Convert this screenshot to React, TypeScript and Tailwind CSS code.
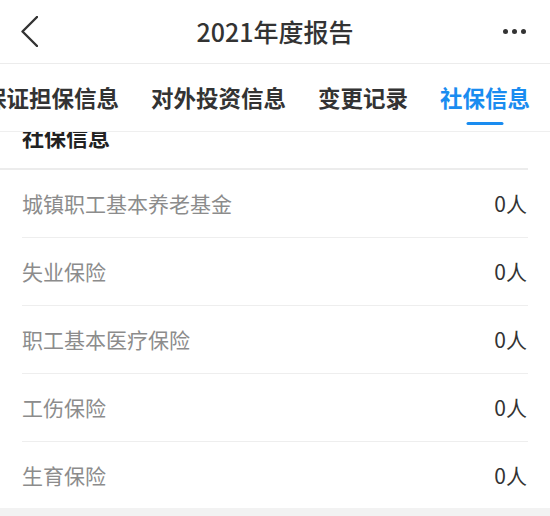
import React from 'react';

const tabs = [
  { label: '保证担保信息', active: false },
  { label: '对外投资信息', active: false },
  { label: '变更记录', active: false },
  { label: '社保信息', active: true },
];

const rows = [
  { label: '城镇职工基本养老基金', value: '0人' },
  { label: '失业保险', value: '0人' },
  { label: '职工基本医疗保险', value: '0人' },
  { label: '工伤保险', value: '0人' },
  { label: '生育保险', value: '0人' },
];

export default function App() {
  return (
    <div
      className="w-[550px] h-[516px] flex flex-col bg-white overflow-hidden"
      style={{ fontFamily: '"Noto Sans CJK SC", "Noto Sans", sans-serif' }}
    >
      {/* Header */}
      <div className="h-[64px] flex items-center justify-between border-b border-[#ececec] shrink-0">
        <div className="w-[90px] pl-[21px] flex items-center">
          <svg width="17" height="31" viewBox="0 0 17 31" fill="none">
            <polyline points="16,1 1.5,15.5 16,30" stroke="#333" strokeWidth="2.4" strokeLinecap="round" strokeLinejoin="round" />
          </svg>
        </div>
        <div className="text-[25px] leading-none font-medium text-[#333]">2021年度报告</div>
        <div className="w-[90px] pr-[24px] flex items-center justify-end gap-[4px]">
          <span className="w-[5px] h-[5px] rounded-full bg-[#333]" />
          <span className="w-[5px] h-[5px] rounded-full bg-[#333]" />
          <span className="w-[5px] h-[5px] rounded-full bg-[#333]" />
        </div>
      </div>

      {/* Tabs */}
      <div className="h-[68px] flex justify-end pr-[4px] overflow-hidden border-b border-[#efefef] shrink-0">
        {tabs.map((tab) => (
          <div key={tab.label} className="relative shrink-0 px-[16px] flex items-center pb-[1px]">
            <span
              className={`text-[22.5px] leading-none font-semibold whitespace-nowrap ${
                tab.active ? 'text-[#1a8cf0]' : 'text-[#333]'
              }`}
            >
              {tab.label}
            </span>
            {tab.active && (
              <span className="absolute bottom-[6px] left-1/2 -translate-x-1/2 w-[37px] h-[3px] rounded-full bg-[#1a8cf0]" />
            )}
          </div>
        ))}
      </div>

      {/* Section title (scrolled under tabs) */}
      <div className="h-[36px] flex flex-col overflow-hidden shrink-0">
        <div className="pl-[22px] -mt-[7px] text-[22px] leading-[22px] font-bold text-[#222]">社保信息</div>
      </div>
      <div className="h-[2px] bg-[#ececec] mr-[22px] shrink-0" />

      {/* Rows */}
      <div className="px-[22px] flex flex-col">
        {rows.map((row, i) => (
          <div
            key={row.label}
            className={`flex items-center justify-between ${
              i < rows.length - 1 ? 'h-[68px] border-b border-[#eeeeee]' : 'h-[66px]'
            }`}
          >
            <span className="text-[21px] leading-none text-[#8c8c8c]">{row.label}</span>
            <span className="text-[21px] leading-none text-[#333] pr-[1px]">{row.value}</span>
          </div>
        ))}
      </div>

      <div className="flex-1 bg-[#f2f2f2]" />
    </div>
  );
}
